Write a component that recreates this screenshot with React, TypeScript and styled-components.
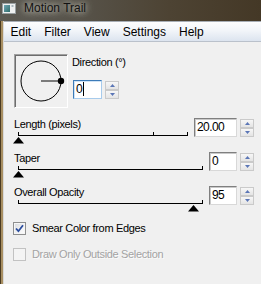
import React from "react";
import styled, { createGlobalStyle } from "styled-components";

const GlobalStyle = createGlobalStyle`
  html, body {
    margin: 0;
    padding: 0;
    background: #f0f0f0;
    overflow: hidden;
  }
  body {
    font-family: "Liberation Sans", Arial, sans-serif;
  }
`;

const Window = styled.div`
  width: 261px;
  height: 284px;
  display: flex;
  flex-direction: column;
  background: #4e4434;
`;

const TitleBar = styled.div`
  height: 21px;
  display: flex;
  align-items: flex-start;
  gap: 8px;
  padding-left: 2px;
  background: linear-gradient(90deg, #5c5a53 0%, #57534a 30%, #4d4333 65%, #443826 100%);
`;

const TitleIcon = styled.svg`
  margin-top: 3px;
  flex: none;
`;

const TitleText = styled.span`
  font-size: 12px;
  line-height: 16px;
  color: #121212;
  text-shadow: 0 0 6px rgba(235, 235, 225, 0.85), 0 0 10px rgba(235, 235, 225, 0.6);
`;

const Frame = styled.div`
  flex: 1;
  display: flex;
  padding-left: 3px;
  background: linear-gradient(90deg, #4a3b22 0, #4a3b22 1px, #a88f62 1px, #a88f62 3px);
`;

const Client = styled.div`
  flex: 1;
  display: flex;
  flex-direction: column;
  background: #f0f0f0;
  border-left: 1px solid #d9d9d9;
`;

const MenuBar = styled.div`
  display: flex;
  height: 19px;
  border-top: 1px solid #a8aeb6;
  border-bottom: 1px solid #bac1cb;
  background: linear-gradient(#fdfdfe 0%, #f2f5f9 45%, #dce4ef 100%);
`;

const MenuItem = styled.span`
  padding: 2px 6.5px 0;
  font-size: 12px;
  line-height: 17px;
  color: #000;
`;

const Body = styled.div`
  display: flex;
  flex-direction: column;
  padding: 12px 0 0 10px;
`;

const TopSection = styled.div`
  display: flex;
  gap: 4px;
  height: 54px;
`;

const DialBox = styled.div`
  width: 54px;
  height: 54px;
  box-sizing: border-box;
  border: 1px solid;
  border-color: #a0a0a0 #ffffff #ffffff #a0a0a0;
  box-shadow: inset 1px 1px 0 #6d6d6d;
  background: #f0f0f0;
`;

const DirectionColumn = styled.div`
  display: flex;
  flex-direction: column;
  padding-top: 2px;
`;

const Label = styled.div`
  font-size: 11px;
  line-height: 13px;
  height: 13px;
  letter-spacing: -0.35px;
  color: #000;
  white-space: nowrap;
`;

const InputGroup = styled.div<{ $offset?: number }>`
  display: flex;
  align-items: flex-start;
  gap: 3px;
  margin-top: ${(p) => p.$offset ?? 0}px;
  margin-left: ${(p) => (p.$offset ? 1 : 0)}px;
`;

const NumberInput = styled.div<{ $width: number; $focused?: boolean }>`
  width: ${(p) => p.$width}px;
  height: 19px;
  box-sizing: border-box;
  padding-left: 2px;
  background: #fff;
  border: 1px solid;
  border-color: ${(p) =>
    p.$focused ? "#3d7bb8 #a7cbec #a7cbec #3d7bb8" : "#7f7f7f #d8d8d8 #d8d8d8 #7f7f7f"};
  box-shadow: ${(p) => (p.$focused ? "inset 1px 1px 0 #cfe3f6" : "inset 1px 1px 0 #c9c9c9")};
  font-size: 12px;
  line-height: 17px;
  letter-spacing: -0.6px;
  color: #000;
`;

const Caret = styled.span`
  border-right: 1px solid #000;
  padding-right: 1px;
`;

const Spinner = styled.div`
  display: flex;
  flex-direction: column;
  width: 14px;
  height: 18px;
  margin-top: 1px;
`;

const SpinButton = styled.div`
  flex: 1;
  display: flex;
  align-items: center;
  justify-content: center;
  box-sizing: border-box;
  border: 1px solid #cacaca;
  background: linear-gradient(#f7f7f7, #e4e4e4);
`;

const Sliders = styled.div`
  display: flex;
  flex-direction: column;
  margin-top: 10px;
`;

const SliderRow = styled.div`
  display: flex;
  width: 240px;
  height: 34px;
`;

const SliderColumn = styled.div`
  flex: 1;
  display: flex;
  flex-direction: column;
  margin-right: 6px;
`;

const Track = styled.div`
  position: relative;
  height: 4px;
  margin-left: 4px;
  border-bottom: 1px solid #000;
`;

const Tick = styled.div`
  position: absolute;
  bottom: 0;
  width: 1px;
  height: 3px;
  background: #000;
`;

const Thumb = styled.svg`
  position: absolute;
  top: 6px;
`;

const CheckList = styled.div`
  display: flex;
  flex-direction: column;
  gap: 13px;
  margin-top: 2px;
  margin-left: -1px;
`;

const CheckRow = styled.div<{ $disabled?: boolean }>`
  display: flex;
  align-items: center;
  gap: 6px;
  height: 13px;
  font-size: 11px;
  line-height: 13px;
  letter-spacing: -0.35px;
  color: ${(p) => (p.$disabled ? "#a3a3a3" : "#000")};
  text-shadow: ${(p) => (p.$disabled ? "1px 1px 0 #fbfbfb" : "none")};
`;

const CheckBox = styled.div<{ $disabled?: boolean }>`
  width: 13px;
  height: 13px;
  box-sizing: border-box;
  flex: none;
  display: flex;
  align-items: center;
  justify-content: center;
  border: 1px solid ${(p) => (p.$disabled ? "#c2c2c2" : "#8e8f8f")};
  background: ${(p) =>
    p.$disabled ? "#f4f4f4" : "linear-gradient(135deg, #d6d9dd 0%, #f3f3f4 60%, #fdfdfd 100%)"};
  box-shadow: ${(p) => (p.$disabled ? "none" : "inset 0 0 0 1px #f6f6f6")};
`;

const Arrow = ({ up }: { up?: boolean }) => (
  <svg width="5" height="3" viewBox="0 0 5 3">
    <polygon points={up ? "2.5,0 5,3 0,3" : "0,0 5,0 2.5,3"} fill="#5b76b6" />
  </svg>
);

const SpinBox = () => (
  <Spinner>
    <SpinButton>
      <Arrow up />
    </SpinButton>
    <SpinButton>
      <Arrow />
    </SpinButton>
  </Spinner>
);

type SliderProps = {
  label: string;
  value: string;
  inputWidth: number;
  position: number;
  ticks: number[];
};

const Slider = ({ label, value, inputWidth, position, ticks }: SliderProps) => (
  <SliderRow>
    <SliderColumn>
      <Label>{label}</Label>
      <Track>
        {ticks.map((t) => (
          <Tick key={t} style={{ left: `calc(${t}% - ${t === 100 ? 1 : 0}px)` }} />
        ))}
        <Thumb
          width="11"
          height="7"
          viewBox="0 0 11 7"
          style={{ left: `calc(${position}% - 5.5px)` }}
        >
          <polygon points="5.5,0 11,6.5 0,6.5" fill="#000" />
        </Thumb>
      </Track>
    </SliderColumn>
    <InputGroup>
      <NumberInput $width={inputWidth}>{value}</NumberInput>
      <SpinBox />
    </InputGroup>
  </SliderRow>
);

export default function App() {
  return (
    <>
      <GlobalStyle />
      <Window>
        <TitleBar>
          <TitleIcon width="14" height="11" viewBox="0 0 14 11">
            <defs>
              <linearGradient id="ti" x1="0" y1="0" x2="1" y2="1">
                <stop offset="0" stopColor="#6fa6b4" />
                <stop offset="1" stopColor="#2f6c6a" />
              </linearGradient>
            </defs>
            <rect x="0.5" y="0.5" width="13" height="10" fill="#eef0f0" stroke="#9aa0a2" />
            <rect x="2" y="2" width="6" height="7" fill="url(#ti)" />
            <rect x="9.5" y="2" width="2" height="2" fill="#a9b7bd" />
          </TitleIcon>
          <TitleText>Motion Trail</TitleText>
        </TitleBar>
        <Frame>
          <Client>
            <MenuBar>
              <MenuItem>Edit</MenuItem>
              <MenuItem>Filter</MenuItem>
              <MenuItem>View</MenuItem>
              <MenuItem>Settings</MenuItem>
              <MenuItem>Help</MenuItem>
            </MenuBar>
            <Body>
              <TopSection>
                <DialBox>
                  <svg width="52" height="52" viewBox="0 0 52 52">
                    <circle cx="26" cy="26" r="20" fill="none" stroke="#000" strokeWidth="1" />
                    <line x1="26" y1="26" x2="45" y2="26" stroke="#7b7b7b" strokeWidth="2" />
                    <circle cx="46" cy="26" r="3.2" fill="#000" />
                  </svg>
                </DialBox>
                <DirectionColumn>
                  <Label>Direction (°)</Label>
                  <InputGroup $offset={11}>
                    <NumberInput $width={29} $focused>
                      <Caret>0</Caret>
                    </NumberInput>
                    <SpinBox />
                  </InputGroup>
                </DirectionColumn>
              </TopSection>
              <Sliders>
                <Slider label="Length (pixels)" value="20.00" inputWidth={43} position={0} ticks={[0, 79.5, 100]} />
                <Slider label="Taper" value="0" inputWidth={28} position={0} ticks={[0, 100]} />
                <Slider label="Overall Opacity" value="95" inputWidth={28} position={95} ticks={[0, 100]} />
              </Sliders>
              <CheckList>
                <CheckRow>
                  <CheckBox>
                    <svg width="9" height="9" viewBox="0 0 9 9">
                      <path d="M1 4.5 L3.4 7.2 L8 1.2" fill="none" stroke="#2b4d9e" strokeWidth="1.8" />
                    </svg>
                  </CheckBox>
                  Smear Color from Edges
                </CheckRow>
                <CheckRow $disabled>
                  <CheckBox $disabled />
                  Draw Only Outside Selection
                </CheckRow>
              </CheckList>
            </Body>
          </Client>
        </Frame>
      </Window>
    </>
  );
}
